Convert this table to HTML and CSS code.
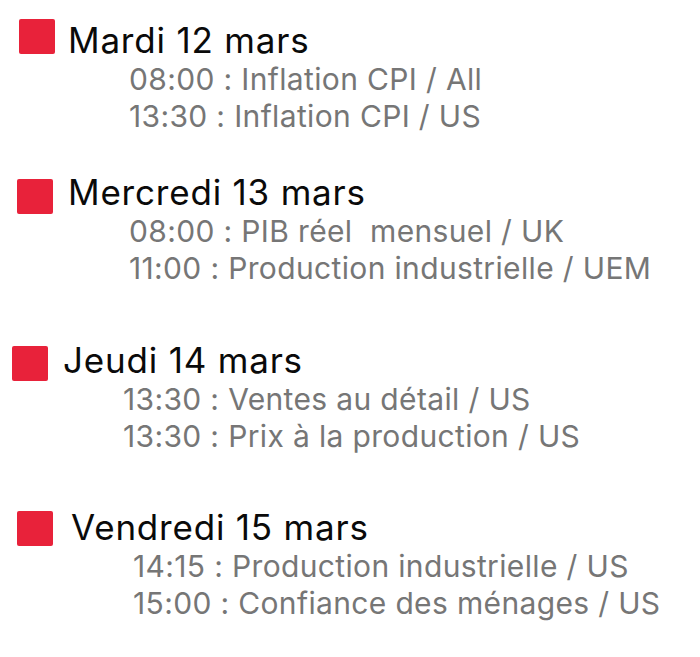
FILE: index.html
```html
<!DOCTYPE html>
<html lang="fr">
<head>
<meta charset="utf-8">
<link rel="stylesheet" href="styles.css">
</head>
<body>
<main class="agenda">
  <section class="day day--1">
    <h2 class="day-title"><span class="marker"></span>Mardi 12 mars</h2>
    <ul class="events">
      <li>08:00 : Inflation CPI / All</li>
      <li>13:30 : Inflation CPI / US</li>
    </ul>
  </section>
  <section class="day day--2">
    <h2 class="day-title"><span class="marker"></span>Mercredi 13 mars</h2>
    <ul class="events">
      <li>08:00 : PIB réel &nbsp;mensuel / UK</li>
      <li>11:00 : Production industrielle / UEM</li>
    </ul>
  </section>
  <section class="day day--3">
    <h2 class="day-title"><span class="marker"></span>Jeudi 14 mars</h2>
    <ul class="events">
      <li>13:30 : Ventes au détail / US</li>
      <li>13:30 : Prix à la production / US</li>
    </ul>
  </section>
  <section class="day day--4">
    <h2 class="day-title"><span class="marker"></span>Vendredi 15 mars</h2>
    <ul class="events">
      <li>14:15 : Production industrielle / US</li>
      <li>15:00 : Confiance des ménages / US</li>
    </ul>
  </section>
</main>
</body>
</html>
```

FILE: styles.css
```css
html, body {
  margin: 0;
  padding: 0;
  background: #ffffff;
}
body {
  font-family: Inter, "Noto Sans", sans-serif;
  font-feature-settings: "calt" 0;
  width: 700px;
  height: 657px;
  overflow: hidden;
}
.agenda {
  display: flex;
  flex-direction: column;
}
.day {
  display: flex;
  flex-direction: column;
}
.day-title {
  display: flex;
  align-items: center;
  gap: 13px;
  margin: 0;
  font-size: 35px;
  font-weight: 400;
  line-height: 37px;
  color: #0a0a0a;
  letter-spacing: 0.8px;
}
.marker {
  width: 36px;
  height: 35px;
  background: #e8223a;
  border-radius: 2px;
  flex: none;
}
.events {
  list-style: none;
  margin: 2px 0 0 0;
  padding: 0 0 0 110px;
  font-size: 30px;
  line-height: 37px;
  color: #767676;
  letter-spacing: 0.35px;
}
.day--1 { padding: 22px 0 0 19px; }
.day--2 { padding: 39px 0 0 17px; }
.day--3 { padding: 55px 0 0 12px; }
.day--4 { padding: 54px 0 0 17px; }

.day--1 .marker { transform: translateY(-4px); }
.day--2 .marker { transform: translateY(4px); }
.day--3 .marker { transform: translateY(3px); }
.day--4 .marker { transform: translateY(1px); }

.day--2 .day-title,
.day--3 .day-title { gap: 15px; }
.day--4 .day-title { gap: 18px; }

.day--2 .events { padding-left: 112px; }
.day--3 .events { padding-left: 111px; }
.day--4 .events { padding-left: 116px; }
```
